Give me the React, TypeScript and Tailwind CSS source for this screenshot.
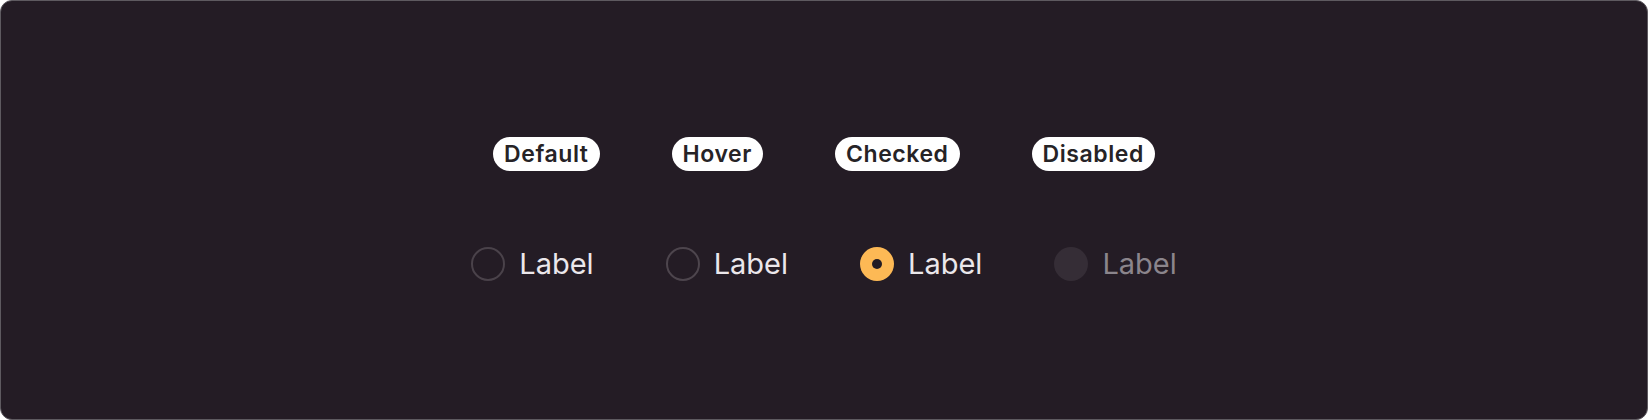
import React from "react";

const badges = ["Default", "Hover", "Checked", "Disabled"];

function Radio({ state }: { state: "default" | "hover" | "checked" | "disabled" }) {
  if (state === "checked") {
    return (
      <span className="flex h-[34px] w-[34px] shrink-0 items-center justify-center rounded-full bg-[#fdb955]">
        <span className="h-[10px] w-[10px] rounded-full bg-[#231c24]" />
      </span>
    );
  }
  if (state === "disabled") {
    return <span className="h-[34px] w-[34px] shrink-0 rounded-full bg-[#352d36]" />;
  }
  return (
    <span
      className={
        state === "hover"
          ? "h-[34px] w-[34px] shrink-0 rounded-full border-2 border-[#4d454d]"
          : "h-[34px] w-[34px] shrink-0 rounded-full border-2 border-[#4a424a]"
      }
    />
  );
}

export default function App() {
  const states: ("default" | "hover" | "checked" | "disabled")[] = ["default", "hover", "checked", "disabled"];
  return (
    <div className="h-[420px] w-[1648px] bg-white" style={{ fontFamily: "Inter, 'Noto Sans', sans-serif" }}>
      <div className="flex h-full w-full flex-col items-center justify-center gap-[73px] rounded-[12px] border border-[#5e5a60] bg-[#241c25] pt-[1px]">
        <div className="flex items-center gap-[72px]">
          {badges.map((b) => (
            <span
              key={b}
              className="flex h-[34px] items-center rounded-full bg-white px-[11px] text-[23px] font-semibold leading-none tracking-[0.025em] text-[#262326]"
            >
              {b}
            </span>
          ))}
        </div>
        <div className="flex items-center gap-[72px]">
          {states.map((s) => (
            <div key={s} className="flex items-center gap-[14px]">
              <Radio state={s} />
              <span
                className={
                  s === "disabled"
                    ? "text-[29px] leading-[40px] text-[#8b858c]"
                    : "text-[29px] leading-[40px] text-[#ebe7eb]"
                }
              >
                Label
              </span>
            </div>
          ))}
        </div>
      </div>
    </div>
  );
}
